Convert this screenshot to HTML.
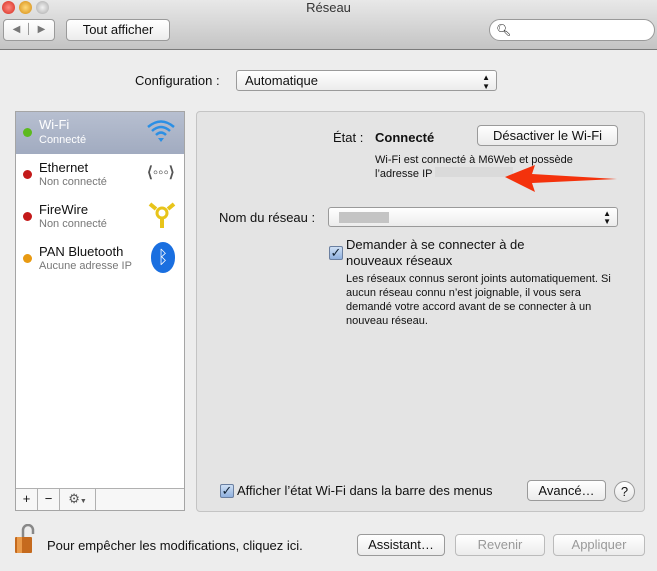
<!DOCTYPE html>
<html><head><meta charset="utf-8"><style>
*{box-sizing:border-box;margin:0;padding:0}
body{width:657px;height:571px;background:#ededed;font-family:"Liberation Sans",sans-serif;font-size:13px;color:#111;position:relative;overflow:hidden}
.a{position:absolute}
.tb{left:0;top:0;width:657px;height:50px;background:linear-gradient(#e8e8e8,#c4c4c4);border-bottom:1px solid #7a7a7a}
.btn{position:absolute;background:linear-gradient(#fff,#ececec);border:1px solid #9a9a9a;border-radius:4px;text-align:center;font-size:13px}
.dot{position:absolute;width:9px;height:9px;border-radius:50%}
.nm{position:absolute;left:39px;font-size:13px}
.st{position:absolute;left:39px;font-size:11px;color:#777}
.sm{font-size:11px}
</style></head><body>
<div class="a tb"></div>
<div class="dot" style="left:2px;top:1px;width:13px;height:13px;background:radial-gradient(#ff8a80,#d42a1e)"></div>
<div class="dot" style="left:19px;top:1px;width:13px;height:13px;background:radial-gradient(#ffd97a,#d48a10)"></div>
<div class="dot" style="left:36px;top:1px;width:13px;height:13px;background:radial-gradient(#f2f2f2,#a8a8a8)"></div>
<div class="a" style="left:0;top:0;width:657px;text-align:center;font-size:13px;color:#333">Réseau</div>
<div class="btn" style="left:3px;top:19px;width:52px;height:22px;color:#777;font-size:10px;line-height:20px">◀ &nbsp;│&nbsp; ▶</div>
<div class="btn" style="top:19px;height:22px;line-height:20px;left:66px;width:104px">Tout afficher</div>
<div class="a" style="left:489px;top:19px;width:166px;height:22px;background:#fff;border:1px solid #999;border-radius:11px;font-size:12px;padding-left:6px;line-height:20px">&#x1F50D;&#xFE0E;</div>

<div class="a" style="left:135px;top:73px">Configuration :</div>
<div class="btn" style="left:236px;top:70px;width:261px;height:21px;text-align:left;padding-left:8px;line-height:19px;border-radius:3px">Automatique<span style="position:absolute;right:6px;font-size:8px;line-height:9px;top:2px">▲<br>▼</span></div>

<div class="a" style="left:15px;top:111px;width:170px;height:400px;background:#fff;border:1px solid #a5a5a5"></div>
<div class="a" style="left:16px;top:112px;width:168px;height:42px;background:linear-gradient(#b7bfd0,#a1abc0)"></div>
<div class="dot" style="left:23px;top:128px;background:#5cba1d"></div>
<div class="nm" style="top:117px;color:#fff">Wi-Fi</div><div class="st" style="top:134px;color:#fff">Connecté</div>
<svg class="a" style="left:146px;top:118px" width="30" height="26"><g fill="none" stroke="#2a8fe5" stroke-width="2.5"><path d="M2 9 Q15 -2 28 9"/><path d="M6 13 Q15 5 24 13"/><path d="M10 17 Q15 12 20 17"/></g><path d="M12 20 L18 20 L15 24Z" fill="#2a8fe5"/></svg>
<div class="dot" style="left:23px;top:170px;background:#c41a1a"></div>
<div class="nm" style="top:160px">Ethernet</div><div class="st" style="top:176px">Non connecté</div>
<div class="a" style="left:147px;top:163px;font-size:15px;color:#555;font-weight:bold">⟨◦◦◦⟩</div>
<div class="dot" style="left:23px;top:212px;background:#c41a1a"></div>
<div class="nm" style="top:202px">FireWire</div><div class="st" style="top:218px">Non connecté</div>
<svg class="a" style="left:148px;top:200px" width="28" height="30"><circle cx="14" cy="13" r="5" fill="none" stroke="#e8c41a" stroke-width="3"/><path d="M2 4l6 5M26 4l-6 5M14 19v9" stroke="#e8c41a" stroke-width="4"/></svg>
<div class="dot" style="left:23px;top:254px;background:#e89a12"></div>
<div class="nm" style="top:244px">PAN Bluetooth</div><div class="st" style="top:260px">Aucune adresse IP</div>
<div class="a" style="left:151px;top:242px;width:24px;height:31px;border-radius:12px/15px;background:#1a6fe0;color:#fff;text-align:center;font-size:18px;line-height:30px">ᛒ</div>
<div class="a" style="left:16px;top:488px;width:168px;height:22px;border-top:1px solid #b0b0b0;background:#f7f7f7"></div>
<div class="a" style="left:16px;top:489px;width:22px;height:21px;border-right:1px solid #b0b0b0;text-align:center;line-height:20px">+</div>
<div class="a" style="left:38px;top:489px;width:22px;height:21px;border-right:1px solid #b0b0b0;text-align:center;line-height:20px">−</div>
<div class="a" style="left:60px;top:489px;width:36px;height:21px;border-right:1px solid #b0b0b0;text-align:center;line-height:20px;color:#555">⚙<span style="font-size:7px">▼</span></div>

<div class="a" style="left:196px;top:111px;width:449px;height:401px;background:#e4e4e4;border:1px solid #c4c4c4;border-radius:4px"></div>
<div class="a" style="left:333px;top:130px">État :</div>
<div class="a" style="left:375px;top:130px;font-weight:bold">Connecté</div>
<div class="btn" style="left:477px;top:125px;width:141px;height:21px;line-height:19px">Désactiver le Wi-Fi</div>
<div class="a sm" style="left:375px;top:153px;line-height:14px">Wi-Fi est connecté à M6Web et possède<br>l’adresse IP <span style="display:inline-block;width:78px;height:10px;background:#dadada"></span></div>
<svg class="a" style="left:503px;top:164px" width="116" height="30"><path d="M2 13 L32 1 L29 10 L114 15 L29 19 L32 28Z" fill="#f4320c"/></svg>
<div class="a" style="left:219px;top:210px">Nom du réseau :</div>
<div class="btn" style="left:328px;top:207px;width:290px;height:20px;border-radius:3px"><span style="position:absolute;left:10px;top:4px;width:50px;height:11px;background:#c4c4c4"></span><span style="position:absolute;right:6px;font-size:8px;line-height:8px;top:2px">▲<br>▼</span></div>
<div class="a" style="left:329px;top:246px;width:14px;height:14px;background:linear-gradient(#cfe0f5,#8fb0de);border:1px solid #6a7fa0;border-radius:2px;font-size:13px;line-height:12px;text-align:center;color:#123">✓</div>
<div class="a" style="left:346px;top:237px;line-height:16px">Demander à se connecter à de<br>nouveaux réseaux</div>
<div class="a sm" style="left:346px;top:272px;line-height:14px">Les réseaux connus seront joints automatiquement. Si<br>aucun réseau connu n’est joignable, il vous sera<br>demandé votre accord avant de se connecter à un<br>nouveau réseau.</div>

<div class="a" style="left:220px;top:484px;width:14px;height:14px;background:linear-gradient(#cfe0f5,#8fb0de);border:1px solid #6a7fa0;border-radius:2px;font-size:13px;line-height:12px;text-align:center;color:#123">✓</div>
<div class="a" style="left:237px;top:483px">Afficher l’état Wi-Fi dans la barre des menus</div>
<div class="btn" style="left:527px;top:480px;width:79px;height:21px;line-height:19px">Avancé…</div>
<div class="a" style="left:614px;top:481px;width:21px;height:21px;border-radius:50%;background:linear-gradient(#fff,#e6e6e6);border:1px solid #999;text-align:center;line-height:19px;font-size:13px">?</div>

<svg class="a" style="left:13px;top:524px" width="22" height="32"><path d="M10 14 V6 a5 5 0 0 1 10 0 V10" fill="none" stroke="#888" stroke-width="2.5"/><rect x="2" y="13" width="17" height="16" rx="1" fill="#c56a1e"/><rect x="4" y="13" width="5" height="16" fill="#e99a4a"/></svg>
<div class="a" style="left:47px;top:538px">Pour empêcher les modifications, cliquez ici.</div>
<div class="btn" style="left:357px;top:534px;width:88px;height:22px;line-height:20px">Assistant…</div>
<div class="btn" style="left:455px;top:534px;width:90px;height:22px;line-height:20px;color:#999;border-color:#bbb">Revenir</div>
<div class="btn" style="left:553px;top:534px;width:92px;height:22px;line-height:20px;color:#999;border-color:#bbb">Appliquer</div>
</body></html>
